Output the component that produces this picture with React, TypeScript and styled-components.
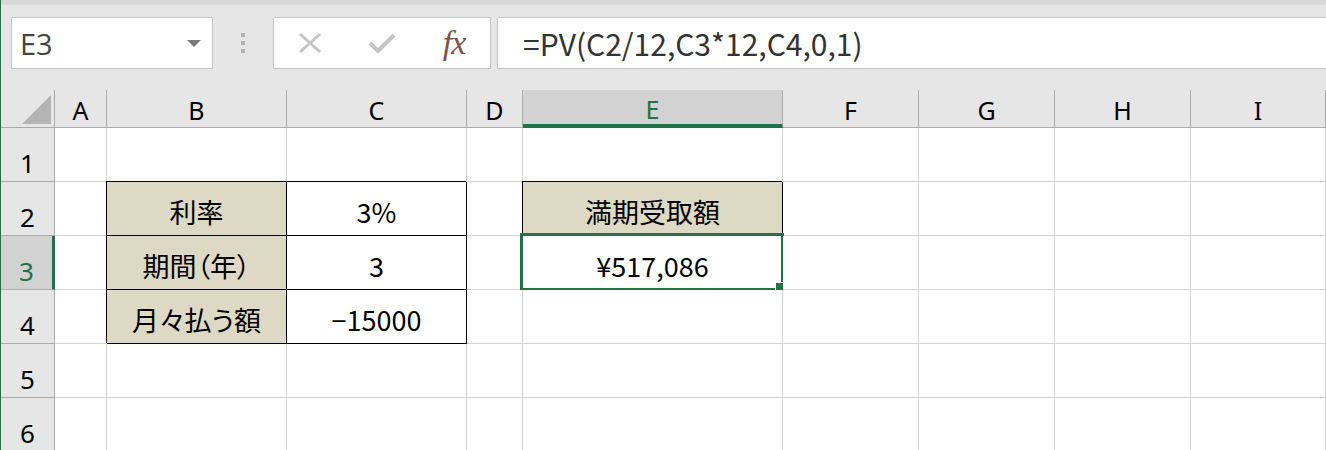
import React from 'react';
import styled, { createGlobalStyle, css } from 'styled-components';

const GREEN = '#217346';
const GRID = '#d4d4d4';
const HEAD_LINE = '#ababab';

const GlobalStyle = createGlobalStyle`
	html, body {
		margin: 0;
		padding: 0;
		background: #ffffff;
	}
	body {
		font-family: "Noto Sans CJK JP", "Noto Sans", sans-serif;
	}
	* {
		box-sizing: border-box;
	}
`;

const Window = styled.div`
	display: flex;
	flex-direction: column;
	width: 1326px;
	height: 450px;
	overflow: hidden;

	background: #e6e6e6;
	border-left: 1px solid ${GREEN};

	& > * {
		flex-shrink: 0;
	}
`;

const TopEdge = styled.div`
	height: 5px;
	background: #d9d9d9;
`;

const FormulaBar = styled.div`
	display: flex;
	height: 52px;
	margin: 12px -6px 21px 10px;
`;

const BarBox = styled.div`
	display: flex;
	align-items: center;

	background: #ffffff;
	border: 1px solid #c6c6c6;
`;

const NameBox = styled(BarBox)`
	justify-content: space-between;
	width: 202px;
	padding: 0 11px 0 8px;

	font-family: "Open Sans", "Noto Sans", sans-serif;
	font-size: 29px;
	color: #444444;
`;

const DropArrow = styled.span`
	width: 0;
	height: 0;
	border-left: 7px solid transparent;
	border-right: 7px solid transparent;
	border-top: 7px solid #7a7a7a;
`;

const Grip = styled.div`
	display: flex;
	flex-direction: column;
	align-items: center;
	justify-content: center;
	gap: 4px;
	width: 60px;
`;

const GripDot = styled.span`
	width: 4px;
	height: 4px;
	background: #b4b4b4;
`;

const ActionBox = styled(BarBox)`
	display: grid;
	grid-template-columns: repeat(3, 72px);
	justify-items: center;
	width: 218px;
`;

const FxLabel = styled.span`
	font-family: "Liberation Serif", "DejaVu Serif", serif;
	font-style: italic;
	font-size: 34px;
	color: #7e5244;
	letter-spacing: -1px;
`;

const FormulaInput = styled(BarBox)`
	flex: 1;
	margin-left: 6px;
	padding-left: 25px;

	font-size: 30px;
	color: #333333;
`;

const Sheet = styled.div`
	display: grid;
	grid-template-columns: 54px 52px 180px 180px 56px 260px 136px 136px 136px 1fr;
	grid-template-rows: 38px repeat(6, 54px);
	background: #ffffff;
`;

const Corner = styled.div`
	display: flex;
	align-items: flex-end;
	justify-content: flex-end;
	padding: 0 3px 3px 0;

	background: #e6e6e6;
	border-right: 1px solid ${HEAD_LINE};
	border-bottom: 1px solid ${HEAD_LINE};
`;

const SelectAllMark = styled.span`
	width: 0;
	height: 0;
	border-left: 29px solid transparent;
	border-bottom: 29px solid #b4b4b4;
`;

const ColumnHead = styled.div<{ $active?: boolean }>`
	display: flex;
	align-items: center;
	justify-content: center;
	padding-top: 3px;

	font-family: "Noto Sans", sans-serif;
	font-size: 25px;
	color: #000000;
	background: #e6e6e6;
	border-right: 1px solid ${HEAD_LINE};
	border-bottom: 1px solid ${HEAD_LINE};

	${({ $active }) =>
		$active &&
		css`
			color: ${GREEN};
			background: #d2d2d2;
			border-bottom: 4px solid ${GREEN};
		`}
`;

const RowHead = styled.div<{ $active?: boolean }>`
	display: flex;
	align-items: flex-end;
	justify-content: center;

	font-family: "Noto Sans", sans-serif;
	font-size: 26px;
	color: #000000;
	background: #e6e6e6;
	border-right: 1px solid ${HEAD_LINE};
	border-bottom: 1px solid ${HEAD_LINE};

	${({ $active }) =>
		$active &&
		css`
			color: ${GREEN};
			background: #d2d2d2;
			border-right: 3px solid ${GREEN};
		`}
`;

const Cell = styled.div<{ $fill?: string; $boxed?: boolean }>`
	position: relative;
	display: flex;
	align-items: flex-end;
	justify-content: center;
	padding-bottom: 4px;

	font-size: 27px;
	font-weight: 400;
	font-feature-settings: "palt";
	color: #000000;
	white-space: nowrap;
	background: ${({ $fill }) => $fill ?? '#ffffff'};
	border-right: 1px solid ${GRID};
	border-bottom: 1px solid ${GRID};

	${({ $boxed }) =>
		$boxed &&
		css`
			border-right-color: #000000;
			border-bottom-color: #000000;
			box-shadow: -1px -1px 0 0 #000000;
		`}
`;

const Selection = styled.div`
	position: absolute;
	top: -3px;
	left: -3px;
	right: -2px;
	bottom: -2px;
	border: 3px solid ${GREEN};
	pointer-events: none;
`;

const FillHandle = styled.span`
	position: absolute;
	right: -4px;
	bottom: -4px;
	width: 10px;
	height: 10px;
	background: ${GREEN};
	border: 1px solid #ffffff;
`;

const LABEL_FILL = '#ddd9c4';

type CellData = {
	text?: string;
	fill?: string;
	boxed?: boolean;
	selected?: boolean;
};

const columns = ['A', 'B', 'C', 'D', 'E', 'F', 'G', 'H', 'I'];
const activeColumn = 'E';
const activeRow = 3;

const cells: Record<string, CellData> = {
	B2: { text: '利率', fill: LABEL_FILL, boxed: true },
	C2: { text: '3%', boxed: true },
	E2: { text: '満期受取額', fill: LABEL_FILL, boxed: true },
	B3: { text: '期間（年）', fill: LABEL_FILL, boxed: true },
	C3: { text: '3', boxed: true },
	E3: { text: '¥517,086', selected: true },
	B4: { text: '月々払う額', fill: LABEL_FILL, boxed: true },
	C4: { text: '−15000', boxed: true },
};

const CancelIcon = () => (
	<svg width="24" height="22" viewBox="0 0 24 22">
		<path d="M2 2 L22 20 M22 2 L2 20" stroke="#c4c4c4" strokeWidth="3" fill="none" />
	</svg>
);

const EnterIcon = () => (
	<svg width="28" height="22" viewBox="0 0 28 22">
		<path d="M2 11 L10 19 L26 3" stroke="#c4c4c4" strokeWidth="4" fill="none" />
	</svg>
);

export default function App() {
	return (
		<Window>
			<GlobalStyle />
			<TopEdge />
			<FormulaBar>
				<NameBox>
					<span>E3</span>
					<DropArrow />
				</NameBox>
				<Grip>
					<GripDot />
					<GripDot />
					<GripDot />
				</Grip>
				<ActionBox>
					<CancelIcon />
					<EnterIcon />
					<FxLabel>fx</FxLabel>
				</ActionBox>
				<FormulaInput>=PV(C2/12,C3*12,C4,0,1)</FormulaInput>
			</FormulaBar>
			<Sheet>
				<Corner>
					<SelectAllMark />
				</Corner>
				{columns.map((col) => (
					<ColumnHead key={col} $active={col === activeColumn}>
						{col}
					</ColumnHead>
				))}
				{[1, 2, 3, 4, 5, 6].map((row) => (
					<React.Fragment key={row}>
						<RowHead $active={row === activeRow}>{row}</RowHead>
						{columns.map((col) => {
							const data = cells[`${col}${row}`] ?? {};
							return (
								<Cell key={col} $fill={data.fill} $boxed={data.boxed}>
									{data.text}
									{data.selected && (
										<Selection>
											<FillHandle />
										</Selection>
									)}
								</Cell>
							);
						})}
					</React.Fragment>
				))}
			</Sheet>
		</Window>
	);
}
